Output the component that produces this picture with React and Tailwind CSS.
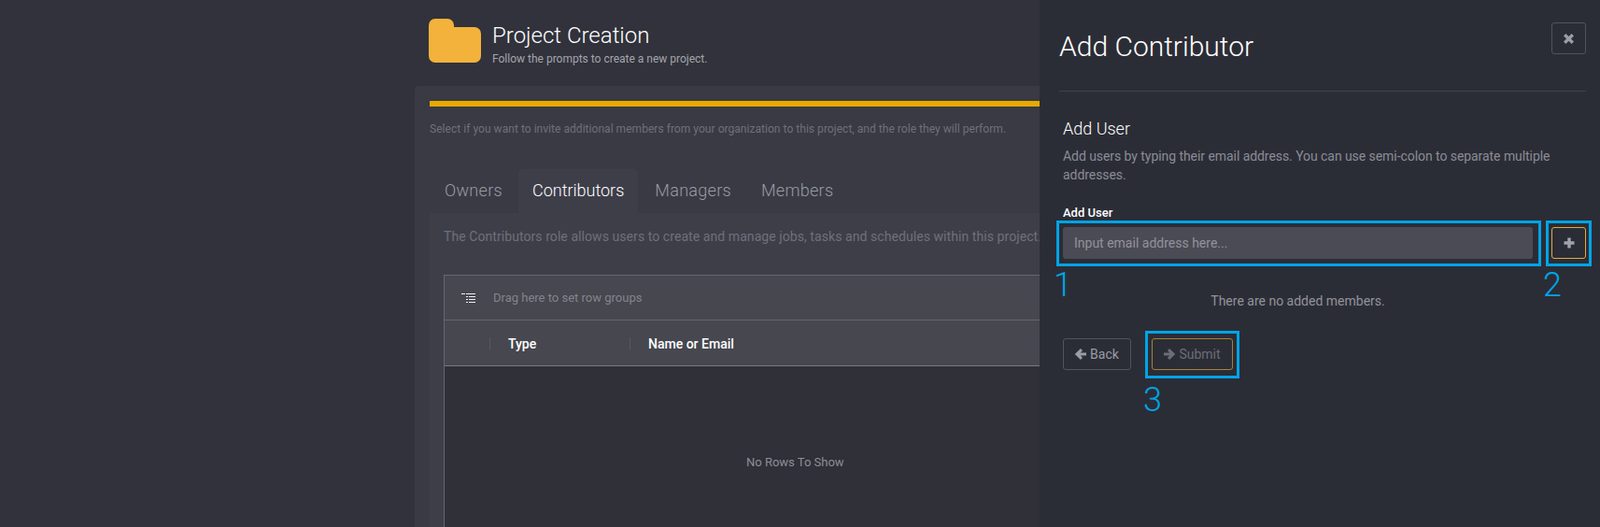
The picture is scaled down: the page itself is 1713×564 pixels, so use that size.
const font = { fontFamily: '"Roboto", "Liberation Sans", sans-serif' };

function FolderIcon() {
  return (
    <svg width="56" height="47" viewBox="0 0 56 47" className="shrink-0">
      <path
        d="M7 0H20a7 7 0 0 1 7 7v2H49a7 7 0 0 1 7 7V40a7 7 0 0 1-7 7H7a7 7 0 0 1-7-7V7a7 7 0 0 1 7-7z"
        fill="#f3b23c"
      />
    </svg>
  );
}

function RowGroupIcon() {
  return (
    <svg width="15" height="11" viewBox="0 0 15 11" fill="#f0f0f2" className="shrink-0">
      <rect x="0" y="0" width="4" height="1" />
      <rect x="5" y="0" width="10" height="1" />
      <rect x="5" y="3" width="2" height="1" />
      <rect x="8" y="3" width="7" height="1" />
      <rect x="5" y="6" width="2" height="1" />
      <rect x="8" y="6" width="7" height="1" />
      <rect x="5" y="9" width="2" height="1" />
      <rect x="8" y="9" width="7" height="1" />
    </svg>
  );
}

function TimesIcon() {
  return (
    <svg width="11" height="11" viewBox="0 0 11 11" stroke="currentColor" strokeWidth="3.4" fill="none">
      <path d="M1.2 1.2L9.8 9.8M9.8 1.2L1.2 9.8" />
    </svg>
  );
}

function PlusIcon() {
  return (
    <svg width="12" height="12" viewBox="0 0 12 12" stroke="currentColor" strokeWidth="3.4" fill="none">
      <path d="M6 0.5V11.5M0.5 6H11.5" />
    </svg>
  );
}

function ArrowIcon({ flip }) {
  return (
    <svg
      width="12"
      height="12"
      viewBox="0 0 12 12"
      stroke="currentColor"
      strokeWidth="3"
      fill="none"
      className={flip ? "-scale-x-100" : ""}
    >
      <path d="M7 1.2L2 6L7 10.8M2.5 6H12" />
    </svg>
  );
}

function Callout({ className }) {
  return <span className={`absolute border-[3px] border-[#00a4e6] pointer-events-none ${className}`} />;
}

function CalloutNumber({ className, children }) {
  return (
    <span className={`absolute text-[36px] font-light leading-none text-[#00a4e6] ${className}`}>
      {children}
    </span>
  );
}

export default function App() {
  const tabs = ["Owners", "Contributors", "Managers", "Members"];

  return (
    <div style={font} className="flex h-[564px] w-[1713px] overflow-hidden bg-[#31323b]">
      {/* Page behind the drawer */}
      <div className="w-[1113px] shrink-0 overflow-hidden pl-[444px] pt-5">
        <div className="ml-[15px] flex h-[48px] gap-3">
          <FolderIcon />
          <div>
            <h1 className="mt-[4px] text-2xl leading-[28px] font-light whitespace-nowrap text-white">
              Project Creation
            </h1>
            <p className="mt-[3px] text-xs leading-4 whitespace-nowrap text-[#a4a5ac]">
              Follow the prompts to create a new project.
            </p>
          </div>
        </div>

        <div className="mt-[24px] h-[480px] w-[800px] rounded-tl bg-[#393a44] pt-4 pl-4">
          <div className="h-[6px] bg-[#e8a900]" />
          <p className="mt-4 text-xs leading-4 tracking-[0.04px] whitespace-nowrap text-[#6f707a]">
            Select if you want to invite additional members from your organization to this project, and the role they will perform.
          </p>

          {/* Tabs */}
          <div className="mt-[35px] flex h-[47px]">
            {tabs.map((tab) => (
              <div
                key={tab}
                className={
                  tab === "Contributors"
                    ? "mr-[2px] ml-px flex items-center rounded-t bg-[#3e3e49] px-[15px] pb-[2px] text-lg font-light text-white"
                    : "flex items-center px-4 pb-[2px] text-lg font-light tracking-[0.3px] text-[#9a9ba3]"
                }
              >
                {tab}
              </div>
            ))}
          </div>

          <div className="h-[340px] bg-[#3e3e49] pt-[15px] pl-[15px]">
            <p className="text-sm leading-5 tracking-[0.07px] whitespace-nowrap text-[#6f707a]">
              The Contributors role allows users to create and manage jobs, tasks and schedules within this project.
            </p>

            {/* Grid */}
            <div className="mt-[31px] h-[300px] border-t border-l border-[#66676e]">
              <div className="flex h-[48px] items-center gap-[19px] border-b border-[#66676e] bg-[#46474f] pt-px pl-[18px]">
                <RowGroupIcon />
                <span className="text-[13px] text-[#83848c]">Drag here to set row groups</span>
              </div>
              <div className="flex h-[49px] items-center border-b border-[#7a7b82] bg-[#46474f] pt-px text-sm font-medium text-white">
                <div className="w-[48px] shrink-0" />
                <div className="h-[14px] w-px bg-[#55565e]" />
                <div className="w-[149px] pl-[19px]">Type</div>
                <div className="h-[14px] w-px bg-[#55565e]" />
                <div className="pl-[19px]">Name or Email</div>
              </div>
              <div className="h-[200px] bg-[#2f3038] pt-[95px] pl-[323px] text-[13px] leading-4 text-[#8d8e96]">
                No Rows To Show
              </div>
            </div>
          </div>
        </div>
      </div>

      {/* Drawer */}
      <aside className="w-[600px] shrink-0 bg-[#2b2d36] pt-6 pr-[15px] pl-[21px]">
        <div className="flex items-start justify-between">
          <h2 className="mt-[7px] text-[30px] leading-[38px] font-light text-white">Add Contributor</h2>
          <button className="flex h-[34px] w-[37px] items-center justify-center rounded-[3px] border border-[#50525f] text-[#9a9ca6]">
            <TimesIcon />
          </button>
        </div>
        <div className="mt-[28px] h-px bg-[#3f414c]" />

        <div className="pl-1">
          <h3 className="mt-7 text-lg leading-6 font-light text-white">Add User</h3>
          <p className="mt-[7px] pr-[20px] text-sm leading-5 tracking-[-0.06px] text-[#8a8c96]">
            Add users by typing their email address. You can use semi-colon to separate multiple addresses.
          </p>

          <label className="mt-[23px] block text-[13px] leading-4 font-medium text-white">Add User</label>
          <div className="mt-[7px] flex gap-5">
            <div className="relative w-[503px]">
              <input
                placeholder="Input email address here..."
                className="h-[34px] w-full rounded-[3px] bg-[#4b4b55] px-3 text-sm text-white outline-none placeholder:text-[#92929a]"
              />
              <Callout className="-top-[7px] -right-[9px] -bottom-[8px] -left-[7px]" />
              <CalloutNumber className="top-[44px] -left-[10px]">1</CalloutNumber>
            </div>
            <div className="relative">
              <button className="flex h-[34px] w-[37px] items-center justify-center rounded-[3px] border border-[#e8a63a] text-[#a0a2ac]">
                <PlusIcon />
              </button>
              <Callout className="-top-[7px] -right-[6px] -bottom-[8px] -left-[6px]" />
              <CalloutNumber className="top-[44px] -left-[9px]">2</CalloutNumber>
            </div>
          </div>

          <p className="mt-[35px] w-[503px] text-center text-sm leading-5 text-[#92939b]">
            There are no added members.
          </p>

          <div className="mt-[30px] flex gap-[22px]">
            <button className="flex h-[34px] w-[73px] items-center justify-center gap-1 rounded-[3px] border border-[#50525f] text-sm text-[#9a9ca6]">
              <ArrowIcon />
              Back
            </button>
            <div className="relative">
              <button className="flex h-[34px] w-[87px] items-center justify-center gap-1 rounded-[3px] border border-[#a5823a] text-sm text-[#6c6d76]">
                <ArrowIcon flip />
                Submit
              </button>
              <Callout className="-top-[8px] -right-[7px] -bottom-[9px] -left-[7px]" />
              <CalloutNumber className="top-[48px] -left-[9px]">3</CalloutNumber>
            </div>
          </div>
        </div>
      </aside>
    </div>
  );
}
